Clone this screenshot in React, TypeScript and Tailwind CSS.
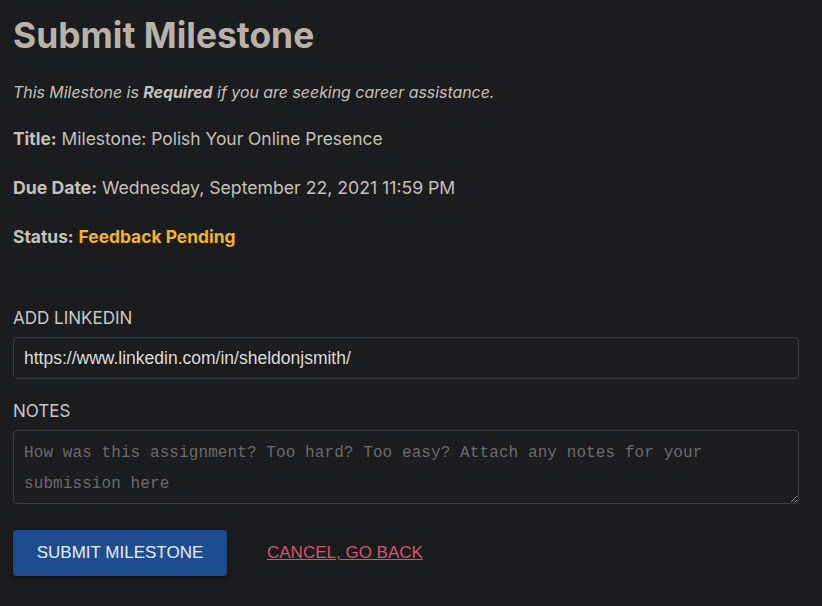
import React, { useState } from 'react';

export default function App() {
  const [linkedin, setLinkedin] = useState('https://www.linkedin.com/in/sheldonjsmith/');
  const [notes, setNotes] = useState('');

  return (
    <main className="min-h-screen bg-[#1b1c1e] pl-[13px] pr-[23px] pt-[14px] font-['Inter',sans-serif] text-[#c4c0ba]">
      <h1 className="text-[35.4px] font-bold leading-[44px] text-[#b8b2aa]">Submit Milestone</h1>

      <p className="mt-[23px] text-[15.9px] italic leading-[24px]">
        This Milestone is <b>Required</b> if you are seeking career assistance.
      </p>
      <p className="mt-[21px] text-[17.4px] leading-[26px]">
        <b>Title:</b> Milestone: Polish Your Online Presence
      </p>
      <p className="mt-[23px] text-[17.65px] leading-[26px]">
        <b>Due Date:</b> Wednesday, September 22, 2021 11:59 PM
      </p>
      <p className="mt-[23px] text-[17.4px] leading-[26px]">
        <b>Status:</b> <b className="text-[#f0b429]">Feedback Pending</b>
      </p>

      <form className="mt-[57px] flex flex-col" onSubmit={(e) => e.preventDefault()}>
        <label className="text-[17px] uppercase leading-[22px] text-[#c8c8c8]">Add LinkedIn</label>
        <input
          type="text"
          className="mt-[8px] h-[42px] rounded-[4px] border border-[#3a3b3d] bg-[#1b1c1e] px-[10px] font-['Liberation_Sans',Arial,sans-serif] text-[17.5px] text-[#dcdcdc] outline-none"
          value={linkedin}
          onChange={(e) => setLinkedin(e.target.value)}
        />

        <label className="mt-[21px] text-[17px] uppercase leading-[22px] text-[#c8c8c8]">Notes</label>
        <textarea
          className="mt-[8px] h-[74px] rounded-[4px] border border-[#3a3b3d] bg-[#1b1c1e] px-[10px] pt-[7px] pb-[3px] font-['Liberation_Mono',monospace] text-[16px] leading-[31px] tracking-[0.09px] text-[#dcdcdc] outline-none placeholder:text-[#6b6b6b]"
          placeholder="How was this assignment? Too hard? Too easy? Attach any notes for your submission here"
          value={notes}
          onChange={(e) => setNotes(e.target.value)}
        />

        <div className="mt-[26px] flex items-center gap-[40px]">
          <button
            type="submit"
            className="h-[46px] w-[214px] rounded-[4px] bg-[#1e4d8f] font-['Liberation_Sans',Arial,sans-serif] text-[17px] uppercase text-[#e8eef7] shadow-[0_2px_4px_rgba(0,0,0,0.5)]"
          >
            Submit Milestone
          </button>
          <a href="#" className="font-['Liberation_Sans',Arial,sans-serif] text-[17px] uppercase text-[#d9546b] underline">
            Cancel, go back
          </a>
        </div>
      </form>
    </main>
  );
}
